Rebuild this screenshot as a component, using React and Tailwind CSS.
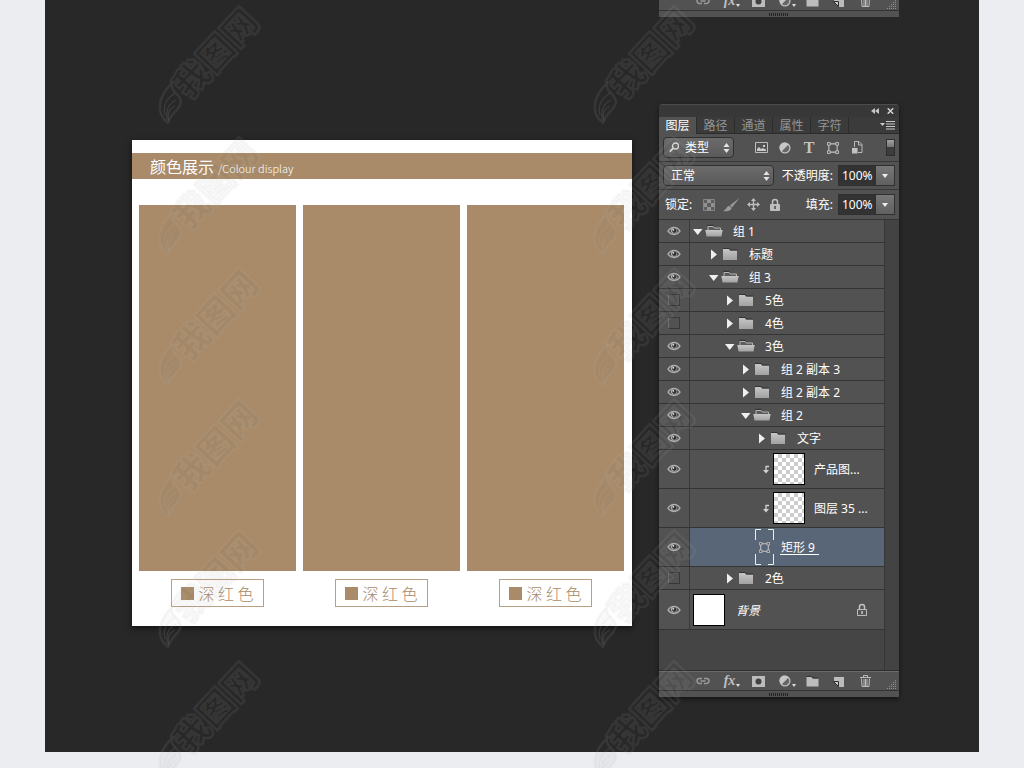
import React from "react";

const INDENT = ["pl-[2px]", "pl-[18px]", "pl-[34px]", "pl-[50px]", "pl-[66px]"];

const LAYERS = [
  { kind: "group", name: "组 1", depth: 0, open: true, visible: true },
  { kind: "group", name: "标题", depth: 1, visible: true },
  { kind: "group", name: "组 3", depth: 1, open: true, visible: true },
  { kind: "group", name: "5色", depth: 2 },
  { kind: "group", name: "4色", depth: 2 },
  { kind: "group", name: "3色", depth: 2, open: true, visible: true },
  { kind: "group", name: "组 2 副本 3", depth: 3, visible: true },
  { kind: "group", name: "组 2 副本 2", depth: 3, visible: true },
  { kind: "group", name: "组 2", depth: 3, open: true, visible: true },
  { kind: "group", name: "文字", depth: 4, visible: true },
  { kind: "clip", name: "产品图...", visible: true },
  { kind: "clip", name: "图层 35 ...", visible: true },
  { kind: "shape", name: "矩形 9", visible: true },
  { kind: "group", name: "2色", depth: 2 },
  { kind: "background", name: "背景", visible: true },
];

function Eye() {
  return (
    <svg width="14" height="10" viewBox="0 0 14 10" fill="none">
      <path d="M1 5.200C2.600 2.600 4.600 1.400 7 1.400s4.400 1.200 6 3.800C11.400 7.600 9.400 8.500 7 8.500S2.600 7.600 1 5.200Z" stroke="#b0b0b0" strokeWidth="1.300" />
      <circle cx="7" cy="4.600" r="3" fill="#b8b8b8" />
      <circle cx="7.300" cy="4.600" r="2.300" fill="#333" />
      <circle cx="6.300" cy="3.800" r=".9" fill="#eee" />
    </svg>
  );
}

function Folder({ open }) {
  return (
    <svg width="18" height="14" viewBox="0 0 18 14">
      <defs>
        <linearGradient id="folderFill" x1="0" y1="0" x2="0" y2="1">
          <stop offset="0" stopColor="#c6c6c6" />
          <stop offset="1" stopColor="#a2a2a2" />
        </linearGradient>
      </defs>
      {open ? (
        <>
          <path d="M3 6V2.500h5l1.200 1.500H15.500V6" fill="#5b5b5b" stroke="#b5b5b5" />
          <path d="M2.500 1.300h6" stroke="#303030" />
          <path d="M.3 6h17.400L16.500 12.500h-15Z" fill="url(#folderFill)" />
        </>
      ) : (
        <>
          <path d="M2 2h6l1 1.500h7V13H2Z" fill="url(#folderFill)" />
          <path d="M2 1.500h6.200L9.300 3H16" stroke="#333" fill="none" />
        </>
      )}
    </svg>
  );
}

function Disclosure({ open }) {
  return (
    <svg width="10" height="12" viewBox="0 0 10 12" fill="#efefef">
      <path d={open ? "M0 4h9.500L4.700 10Z" : "M2 1.500l6 5-6 5Z"} />
    </svg>
  );
}

function UpDown({ className }) {
  return (
    <svg className={className} width="7" height="10" viewBox="0 0 7 10" fill="#e4e4e4">
      <path d="M3.500 0L6.500 4h-6ZM3.500 10l3-4h-6Z" />
    </svg>
  );
}

function HalfCircle() {
  return (
    <svg width="12" height="12" viewBox="0 0 12 12">
      <circle cx="6" cy="6" r="4.900" fill="#666" stroke="#bdbdbd" strokeWidth="1.300" />
      <path d="M9.500 2.500A5 5 0 1 0 2.500 9.500Z" fill="#c6c6c6" />
    </svg>
  );
}

function Bounds({ size }) {
  return (
    <svg width={size} height={size} viewBox="0 0 13 13" fill="#555" stroke="#c4c4c4" strokeWidth="1">
      <path d="M2 2h9v9H2Z" fill="none" strokeWidth="1.200" />
      <path d="M.5.5h3v3h-3ZM9.500.5h3v3h-3ZM.5 9.500h3v3h-3ZM9.500 9.500h3v3h-3Z" />
    </svg>
  );
}

function Padlock({ hollow }) {
  return (
    <svg width="12" height="14" viewBox="0 0 12 14">
      <path d="M3.500 7V4a2.500 2.500 0 0 1 5 0v3" fill="none" stroke="#c2c2c2" strokeWidth="1.500" />
      <path d="M1.500 6.500h9v6h-9Z" fill={hollow ? "#555" : "#bdbdbd"} stroke="#bdbdbd" />
      <path d="M5.300 8h1.500v3H5.300Z" fill={hollow ? "#c8c8c8" : "#444"} />
    </svg>
  );
}

function IconButton({ label, children, className = "" }) {
  return (
    <button type="button" aria-label={label} className={"flex items-center justify-center " + className}>
      {children}
    </button>
  );
}

function PanelFooter() {
  return (
    <div className="border-t border-[#2d2d2d] bg-[#525252]">
      <div className="flex h-[19px] items-center border-t border-[#6a6a6a] pr-[2px] pl-[30px]">
        <IconButton label="链接图层" className="w-[28px]">
          <svg width="14" height="8" viewBox="0 0 14 8" fill="none" stroke="#999" strokeWidth="1.500">
            <path d="M6 1.500H3.500a2.500 2.500 0 0 0 0 5H6M8 1.500h2.500a2.500 2.500 0 0 1 0 5H8M4.500 4h5" />
          </svg>
        </IconButton>
        <IconButton label="图层样式" className="w-[30px] gap-px">
          <span className="font-['Liberation_Serif',serif] text-sm leading-4 font-bold text-[#c0c0c0] italic">fx</span>
          <svg width="4" height="12" viewBox="0 0 4 12" fill="#ddd"><path d="M0 9h4l-2 3Z" /></svg>
        </IconButton>
        <IconButton label="添加图层蒙版" className="w-[22px]">
          <svg width="13" height="11" viewBox="0 0 13 11"><path d="M0 0h13v11H0Z" fill="#bcbcbc" /><circle cx="6.500" cy="5.500" r="3" fill="#414141" /></svg>
        </IconButton>
        <IconButton label="调整图层" className="w-[36px] gap-px">
          <HalfCircle />
          <svg width="4" height="12" viewBox="0 0 4 12" fill="#ddd"><path d="M0 9h4l-2 3Z" /></svg>
        </IconButton>
        <IconButton label="新建组" className="w-[14px]">
          <svg width="13" height="11" viewBox="0 0 13 11"><path d="M.5 1h5l1 1.500h6V10.500H.5Z" fill="#bcbcbc" /><path d="M.5.5H6L7 2h5.500" stroke="#333" fill="none" /></svg>
        </IconButton>
        <IconButton label="新建图层" className="w-[38px]">
          <svg width="11" height="11" viewBox="0 0 11 11"><path d="M1 1h10v10H6V5.500H1Z" fill="#bcbcbc" /><path d="M.5 5.500H5.500V10.500Z" fill="#c9c9c9" stroke="#2e2e2e" /></svg>
        </IconButton>
        <IconButton label="删除图层" className="w-[16px]">
          <svg width="11" height="12" viewBox="0 0 11 12" fill="none" stroke="#bcbcbc"><path d="M0 2.500h11M3.500 2V.5h4V2M1.500 3.500l.5 8h7l.5-8M4 4v7M5.500 4v7M7 4v7" /></svg>
        </IconButton>
        <svg className="ml-auto self-end" width="10" height="10" viewBox="0 0 10 10" stroke="#929292" strokeDasharray="1 1">
          <path d="M8 .5h2M6 2.500h4M4 4.500h6M2 6.500h8M0 8.500h10" />
        </svg>
      </div>
      <div className="flex h-[7px] items-center justify-center border-t border-[#333]">
        <svg width="20" height="3" viewBox="0 0 20 3"><path d="M0 1.500h20" stroke="#222" strokeWidth="3" strokeDasharray="1 1" /></svg>
      </div>
    </div>
  );
}

function PercentField({ id, label }) {
  return (
    <div className="ml-auto flex items-center gap-[5px]">
      <label htmlFor={id}>{label}:</label>
      <div className="flex h-[21px] border border-[#303030]">
        <input id={id} defaultValue="100%" className="w-[36px] bg-[#333] pl-[3px] text-xs text-white outline-none" />
        <IconButton label={label + "选项"} className="w-[19px] border-l border-[#303030] bg-linear-to-b from-[#777] to-[#606060]">
          <svg width="6" height="4" viewBox="0 0 6 4" fill="#eee"><path d="M0 0h6L3 4Z" /></svg>
        </IconButton>
      </div>
    </div>
  );
}

function Thumb({ plain }) {
  return (
    <span
      className={
        "block size-8 shrink-0 border border-black " +
        (plain
          ? "bg-white"
          : "bg-white bg-[conic-gradient(#ccc_25%,#fff_0_50%,#ccc_0_75%,#fff_0)] bg-size-[8px_8px]")
      }
    />
  );
}

function LayerContent({ layer }) {
  if (layer.kind === "group") {
    return (
      <div className={"flex items-center " + INDENT[layer.depth]}>
        <button type="button" aria-label={layer.name} aria-expanded={!!layer.open} className="ml-px">
          <Disclosure open={layer.open} />
        </button>
        <span className="ml-[2px]"><Folder open={layer.open} /></span>
        <span className="ml-[10px] pt-[2px]">{layer.name}</span>
      </div>
    );
  }
  if (layer.kind === "clip") {
    return (
      <div className="flex items-center pl-[72px]">
        <svg width="8" height="9" viewBox="0 0 8 9"><path d="M7 1.500H4V6" fill="none" stroke="#d0d0d0" strokeWidth="1.300" /><path d="M1 5h6L4 8.500Z" fill="#d0d0d0" /></svg>
        <span className="ml-[3px]"><Thumb /></span>
        <span className="ml-[9px] pt-[2px]">{layer.name}</span>
      </div>
    );
  }
  if (layer.kind === "shape") {
    return (
      <div className="flex items-center pl-[65px]">
        <span className="grid place-items-center">
          <svg className="col-start-1 row-start-1" width="19" height="36" viewBox="0 0 19 36" fill="none" stroke="#eee">
            <path d="M.5 11V.5H6M13 .5h5.500V11M.5 25v10.500H6M13 35.500h5.500V25" />
          </svg>
          <span className="col-start-1 row-start-1"><Bounds size={11} /></span>
        </span>
        <span className="ml-[6px] pt-[2px]">
          <span className="block border-b border-white px-px leading-3">{layer.name}&nbsp;</span>
        </span>
      </div>
    );
  }
  return (
    <div className="flex flex-1 items-center pr-4 pl-[3px]">
      <Thumb plain />
      <span className="ml-[11px] pt-[2px] italic">{layer.name}</span>
      <span className="ml-auto"><Padlock hollow /></span>
    </div>
  );
}

function LayerRow({ layer }) {
  const height = layer.kind === "group" ? "h-[23px]" : layer.kind === "background" ? "h-10" : "h-[39px]";
  return (
    <li className={"flex border-b border-[#343434] bg-[#525252] " + height}>
      <IconButton label={"显示 " + layer.name} className="w-[31px] border-r border-[#3a3a3a]">
        {layer.visible ? <Eye /> : <span className="size-3 border border-t-[#383838] border-r-[#383838] border-b-[#383838] border-l-[#6e6e6e]" />}
      </IconButton>
      <div className={"flex flex-1 " + (layer.kind === "shape" ? "bg-[#596678]" : "")}>
        <LayerContent layer={layer} />
      </div>
    </li>
  );
}

function LayersPanel() {
  return (
    <section className="overflow-hidden rounded-t bg-[#525252] text-xs text-white shadow-[0_2px_5px_rgba(0,0,0,0.5)]">
      <div className="flex h-[13px] items-center justify-end gap-2 border-t border-[#4c4c4c] bg-[#383838] pr-[5px]">
        <IconButton label="折叠面板">
          <svg width="8" height="6" viewBox="0 0 8 6" fill="#c6c6c6"><path d="M4 0v6L0 3ZM8 0v6L4 3Z" /></svg>
        </IconButton>
        <IconButton label="关闭面板">
          <svg width="7" height="6" viewBox="0 0 7 6" stroke="#d5d5d5" strokeWidth="1.500"><path d="M.7.3l5.500 5.400M6.200.3L.7 5.700" /></svg>
        </IconButton>
      </div>
      <div role="tablist" className="flex h-[17px] bg-[#3b3b3b] text-[#949494]">
        <button role="tab" aria-selected="true" className="w-[38px] border-r border-[#2c2c2c] bg-[#525252] pt-px leading-4 text-white">图层</button>
        {["路径", "通道", "属性", "字符"].map((t) => (
          <button key={t} role="tab" aria-selected="false" className="w-[38px] border-r border-b border-[#2c2c2c] pt-px leading-4">{t}</button>
        ))}
        <IconButton label="面板菜单" className="flex-1 border-b border-[#2c2c2c] pr-1">
          <svg className="ml-auto" width="15" height="9" viewBox="0 0 15 9" stroke="#c8c8c8"><path d="M6 .5h9M6 3h9M6 5.500h9M6 8h9" /><path d="M0 2h5L2.500 5Z" fill="#c8c8c8" stroke="none" /></svg>
        </IconButton>
      </div>
      <div className="flex h-7 items-center border-b border-[#383838] pr-1 pl-1">
        <div className="relative">
          <select aria-label="筛选类型" className="h-[21px] w-[71px] appearance-none rounded-sm border border-[#303030] bg-linear-to-b from-[#6b6b6b] to-[#5a5a5a] pl-[21px] text-white">
            <option>类型</option>
          </select>
          <svg className="pointer-events-none absolute top-[5px] left-[6px]" width="11" height="11" viewBox="0 0 11 11" fill="none" stroke="#ddd" strokeWidth="1.300"><circle cx="6.500" cy="4" r="3" /><path d="M4.300 6.200L.8 9.700" strokeWidth="1.700" /></svg>
          <UpDown className="pointer-events-none absolute top-[6px] right-[4px]" />
        </div>
        <div className="ml-[15px] flex">
          <IconButton label="像素图层" className="w-6">
            <svg width="13" height="11" viewBox="0 0 13 11"><path d="M.5.5h12v10H.5Z" fill="none" stroke="#bcbcbc" /><path d="M2 9V7l2-2 2 2 1.500-1L11 7.500V9Z" fill="#c9c9c9" /><path d="M8 3h2v2H8Z" fill="#c9c9c9" /></svg>
          </IconButton>
          <IconButton label="调整图层" className="w-6"><HalfCircle /></IconButton>
          <IconButton label="文字图层" className="w-6"><span className="font-['Liberation_Serif',serif] text-base leading-4 font-bold text-[#c4c4c4]">T</span></IconButton>
          <IconButton label="形状图层" className="w-6"><Bounds size={12} /></IconButton>
          <IconButton label="智能对象" className="w-6">
            <svg width="12" height="13" viewBox="0 0 12 13"><path d="M3.500 6V.5H8L11 3.500V11.500H7" fill="none" stroke="#b8b8b8" /><path d="M7.500.5V4H11" fill="none" stroke="#b8b8b8" /><path d="M1 7h5.500v5.500H1Z" fill="#c2c2c2" /></svg>
          </IconButton>
        </div>
        <button type="button" role="switch" aria-checked="true" aria-label="图层过滤" className="ml-auto h-[17px] w-[9px] border border-[#2e2e2e] bg-[#3d3d3d]">
          <span className="block h-[7px] bg-linear-to-b from-[#a0a0a0] to-[#777]" />
          <span className="block h-[8px]" />
        </button>
      </div>
      <div className="flex h-7 items-center border-b border-[#383838] px-1">
        <div className="relative">
          <select aria-label="混合模式" className="h-[21px] w-[111px] appearance-none rounded-sm border border-[#303030] bg-linear-to-b from-[#6b6b6b] to-[#5a5a5a] pl-[7px] text-white">
            <option>正常</option>
          </select>
          <UpDown className="pointer-events-none absolute top-[6px] right-[4px]" />
        </div>
        <PercentField id="opacity" label="不透明度" />
      </div>
      <div className="flex h-[30px] items-center border-b border-[#343434] pr-1 pl-[6px]">
        <span>锁定:</span>
        <div className="ml-[6px] flex">
          <IconButton label="锁定透明像素" className="w-[22px]">
            <svg width="12" height="12" viewBox="0 0 12 12"><path d="M.5.5h11v11H.5Z" fill="#5d5d5d" stroke="#858585" /><path d="M4 1h4v3H4ZM1 4h3v4H1ZM8 4h3v4H8ZM4 8h4v3H4Z" fill="#929292" /></svg>
          </IconButton>
          <IconButton label="锁定图像像素" className="w-[22px]">
            <svg width="17" height="14" viewBox="0 0 17 14" fill="#999"><path d="M16.500 0L9 9.500 7 7.300ZM6.500 7.700l2.200 2.200C8 13 4 13.800 0 13 3 12 3.500 8 6.500 7.700Z" /></svg>
          </IconButton>
          <IconButton label="锁定位置" className="w-[22px]">
            <svg width="13" height="13" viewBox="0 0 13 13" fill="#bdbdbd"><path d="M6.500 0L9 3H4ZM6.500 13L4 10h5ZM0 6.500L3 4v5ZM13 6.500L10 9V4Z" /><path d="M6.500 2v9M2 6.500h9" stroke="#bdbdbd" strokeWidth="1.400" /></svg>
          </IconButton>
          <IconButton label="锁定全部" className="w-[22px]"><Padlock /></IconButton>
        </div>
        <PercentField id="fill" label="填充" />
      </div>
      <div className="flex bg-[#454545]">
        <ul className="flex-1 pb-10">
          {LAYERS.map((l) => <LayerRow key={l.name} layer={l} />)}
        </ul>
        <div className="w-[15px] border-l border-[#363636] bg-[#434343]" />
      </div>
      <PanelFooter />
    </section>
  );
}

function Poster() {
  return (
    <article className="w-[500px] bg-white pt-[13px] pb-[19px] font-['Noto_Sans_CJK_SC',sans-serif] shadow-[0_2px_6px_rgba(0,0,0,0.6)]">
      <h1 className="flex h-[26px] items-center bg-[#a98b69] pl-[18px] text-base text-white">
        颜色展示<span className="ml-1 pt-1 font-['Noto_Sans_CJK_SC',sans-serif] text-[11px] leading-4 font-light">/Colour display</span>
      </h1>
      <div className="mt-[26px] grid grid-cols-3 gap-[7px] pr-2 pl-[7px]">
        {[0, 1, 2].map((i) => (
          <figure key={i} className="flex flex-col items-center">
            <div className="h-[366px] w-full bg-[#a98b69]" />
            <figcaption className="mt-2 flex h-7 w-[93px] items-center justify-center gap-1 border border-[#b9a084] text-base font-light text-[#a98b69]">
              <span className="size-[13px] bg-[#a98b69]" />
              深 红 色
            </figcaption>
          </figure>
        ))}
      </div>
    </article>
  );
}

function Watermark() {
  return (
    <svg width="112" height="131" viewBox="0 0 112 131" className="block">
      <g strokeLinejoin="round">
        <path d="M16 123C3 113 6 97 20 83c-2 9 8 10 9 19-1 8-10 10-13 21Z" fill="rgb(60 60 60 / .03)" stroke="rgb(185 185 185 / .11)" strokeWidth="2.500" />
        <path d="M13 115c-3-11 3-17 10-22M15 120c-1-10 1-16 9-20M17 121c-2-8 0-12 6-15" fill="none" stroke="rgb(185 185 185 / .14)" strokeWidth="1.300" />
        <g transform="translate(38 101) rotate(-47)">
          <text
            x="0" y="-1" fontSize="35" fontWeight="900"
            className="font-['Noto_Sans_CJK_SC',sans-serif]"
            fill="rgb(40 40 40 / .03)" stroke="rgb(185 185 185 / .11)" strokeWidth="2.500"
          >
            我图网
          </text>
        </g>
      </g>
    </svg>
  );
}

function WatermarkColumn() {
  return (
    <div>
      {[0, 1, 2, 3, 4, 5].map((i) => <Watermark key={i} />)}
    </div>
  );
}

export default function App() {
  return (
    <div className="relative min-h-screen overflow-hidden bg-[#ebedf1] px-[45px] font-['Noto_Sans','Noto_Sans_CJK_SC',sans-serif]">
      <main className="flex items-start justify-between overflow-hidden bg-[#282828] pr-20 pb-[55px] pl-[87px]">
        <div className="pt-[140px]"><Poster /></div>
        <div className="-mt-[10px] w-60">
          <PanelFooter />
          <div className="mt-[87px]"><LayersPanel /></div>
        </div>
      </main>
      <div aria-hidden="true" className="pointer-events-none absolute inset-0 flex gap-[323px] overflow-hidden pl-[152px]">
        <WatermarkColumn />
        <WatermarkColumn />
      </div>
    </div>
  );
}
